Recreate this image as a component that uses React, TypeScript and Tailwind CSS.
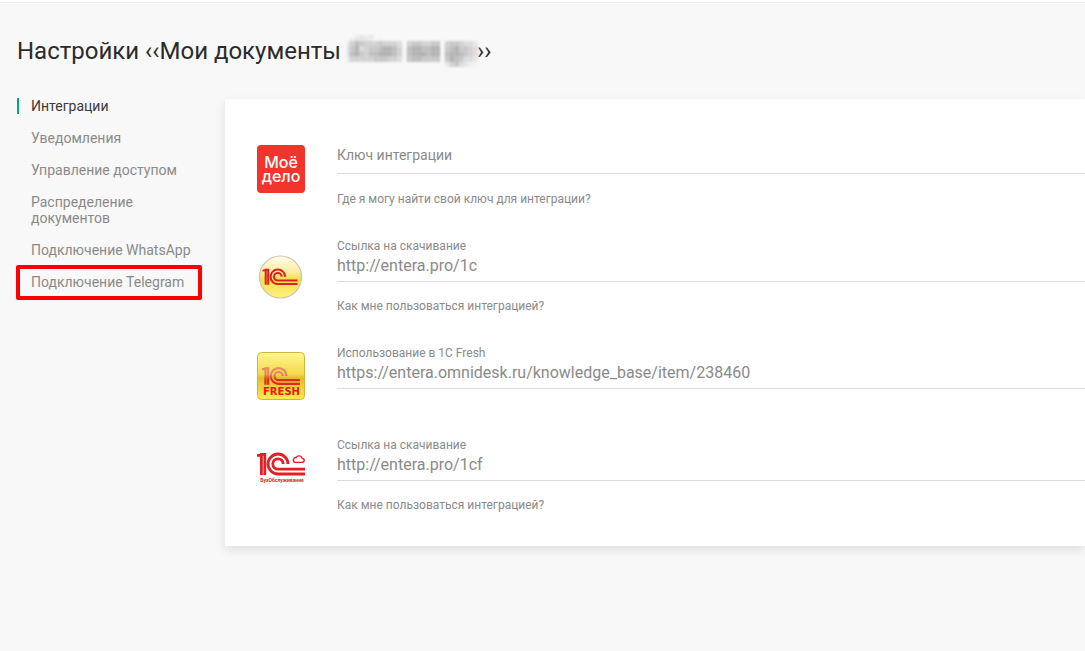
import type { ReactNode } from 'react';

const menu = [
	{ title: 'Интеграции', active: true },
	{ title: 'Уведомления' },
	{ title: 'Управление доступом' },
	{ title: 'Распределение документов' },
	{ title: 'Подключение WhatsApp' },
	{ title: 'Подключение Telegram', marked: true },
];

// grey level of every cell of the hidden company name, a dot is an empty cell
const mosaic = [
	'..3434......................',
	'.34443.1....................',
	'468766676665.6776677.6776554',
	'579567789986.8998899.7897765',
	'589768899986.8999899.8998765',
	'466666777665.7887777.7987554',
	'.....................4675431',
];

const greys: Record<string, string> = {
	'1': '#f3f3f3',
	'3': '#eeeeee',
	'4': '#e6e6e6',
	'5': '#dddddd',
	'6': '#d2d2d2',
	'7': '#c8c8c8',
	'8': '#bebebe',
	'9': '#b4b2b0',
};

function HiddenName() {
	return (
		<svg
			viewBox="0 0 134 32"
			aria-hidden="true"
			className="h-8 w-[134px] blur-[1px]">
			{mosaic.map((row, y) =>
				[...row].map((cell, x) =>
					cell === '.' ? null : (
						<rect
							key={`${x}-${y}`}
							x={x * 4.75 - 2}
							y={y < 2 ? y * 3 : 6 + (y - 2) * 5.2}
							width="4.9"
							height={y < 2 ? 3.2 : 5.4}
							fill={greys[cell]}
						/>
					),
				),
			)}
		</svg>
	);
}

// "1C" sign: the digit, then two nested arcs that run into a tail
function OneC({ color }: { color: string }) {
	return (
		<g
			fill="none"
			stroke={color}
			strokeWidth="2.8">
			<path d="M0 3.4h4.4V23" />
			<path d="M3 2.4h4.8V23" />
			<path d="M31 12A10 10 0 1 0 21 22H48" />
			<path d="M26.2 12A5.2 5.2 0 1 0 21 17.2H48" />
		</g>
	);
}

function MoeDeloIcon() {
	return (
		<svg
			viewBox="0 0 48 48"
			className="size-12">
			<rect
				width="48"
				height="48"
				rx="4"
				fill="#f2352c"
			/>
			<g
				fill="#fff"
				fontFamily="Inter, sans-serif"
				fontWeight="500"
				fontSize="16"
				textAnchor="middle">
				<text
					x="24"
					y="23">
					Моё
				</text>
				<text
					x="24"
					y="37">
					дело
				</text>
			</g>
		</svg>
	);
}

function OneCIcon() {
	return (
		<svg
			viewBox="0 0 48 48"
			className="size-12">
			<defs>
				<linearGradient
					id="coin"
					x1="0"
					y1="0"
					x2="0"
					y2="1">
					<stop
						offset="0"
						stopColor="#fffdf0"
					/>
					<stop
						offset=".4"
						stopColor="#fbec9c"
					/>
					<stop
						offset=".55"
						stopColor="#f4dc50"
					/>
					<stop
						offset="1"
						stopColor="#fdf37c"
					/>
				</linearGradient>
			</defs>
			<circle
				cx="23.5"
				cy="24"
				r="21"
				fill="url(#coin)"
				stroke="#cbc3ac"
				strokeWidth="1.2"
			/>
			<g transform="translate(5.5 15) scale(.73)">
				<OneC color="#d8231c" />
			</g>
		</svg>
	);
}

function FreshIcon() {
	return (
		<svg
			viewBox="0 0 48 48"
			className="size-12">
			<defs>
				<linearGradient
					id="fresh"
					x1="0"
					y1="0"
					x2="0"
					y2="1">
					<stop
						offset="0"
						stopColor="#fff88e"
					/>
					<stop
						offset=".46"
						stopColor="#f3d94e"
					/>
					<stop
						offset=".54"
						stopColor="#e5bd28"
					/>
					<stop
						offset="1"
						stopColor="#fdea50"
					/>
				</linearGradient>
				<linearGradient
					id="freshSign"
					gradientUnits="userSpaceOnUse"
					x1="0"
					y1="0"
					x2="0"
					y2="24">
					<stop
						offset=".4"
						stopColor="#e58a60"
					/>
					<stop
						offset=".7"
						stopColor="#dc2a22"
					/>
				</linearGradient>
			</defs>
			<rect
				x=".5"
				y=".5"
				width="47"
				height="47"
				rx="4"
				fill="url(#fresh)"
				stroke="#d6b43a"
			/>
			<g transform="translate(5 14.5) scale(.79)">
				<OneC color="url(#freshSign)" />
			</g>
			<text
				x="24.5"
				y="43"
				fill="#e01b1b"
				fontFamily="DejaVu Sans, sans-serif"
				fontWeight="700"
				fontSize="10"
				textAnchor="middle">
				FRESH
			</text>
		</svg>
	);
}

function AccountingIcon() {
	return (
		<svg
			viewBox="0 0 48 48"
			className="size-12">
			<g transform="translate(0 8)">
				<OneC color="#e31e24" />
			</g>
			<path
				d="M38.2 18.4h6.9a2 2 0 0 0 .2-4 3.4 3.4 0 0 0-6.2-.9 2.5 2.5 0 0 0-.9 4.9Z"
				fill="none"
				stroke="#e31e24"
				strokeWidth="1.4"
			/>
			<text
				x="25"
				y="38"
				fill="#e31e24"
				fontFamily="Roboto, sans-serif"
				fontWeight="700"
				fontSize="5"
				textAnchor="middle">
				БухОбслуживание
			</text>
		</svg>
	);
}

type RowProps = {
	id: string;
	label: string;
	value?: string;
	hint?: string;
	icon: ReactNode;
	iconClass: string;
};

function IntegrationRow({ id, label, value, hint, icon, iconClass }: RowProps) {
	return (
		<div className="flex min-h-[62px] gap-8">
			<div className={`shrink-0 ${iconClass}`}>{icon}</div>
			<div className="flex min-w-0 grow flex-col">
				{value ? (
					<>
						<label
							htmlFor={id}
							className="text-xs/[18px]">
							{label}
						</label>
						<input
							id={id}
							readOnly
							defaultValue={value}
							className="h-[27px] w-full border-b border-[#dcdcdc] pb-1.5 text-base/5 outline-none"
						/>
					</>
				) : (
					<input
						id={id}
						aria-label={label}
						placeholder={label}
						className="mt-2 mb-px h-[37px] w-full border-b border-[#dcdcdc] text-sm outline-none placeholder:text-[#8a8a8a]"
					/>
				)}
				{hint && (
					<a
						href="#"
						className="mt-4 self-start text-xs/4">
						{hint}
					</a>
				)}
			</div>
		</div>
	);
}

export default function App() {
	return (
		<div className="min-h-screen overflow-hidden bg-[#f8f8f8] font-['Roboto',sans-serif] text-[#8a8a8a]">
			<header className="h-[3px] border-b border-[#eeeeee] bg-white" />
			<main className="pt-8 pl-[17px]">
				<h1 className="flex text-2xl text-[#2b2b2b]">
					<span className="whitespace-pre">Настройки ‹‹Мои документы </span>
					<span className="w-[130px]">
						<HiddenName />
					</span>
					<span>››</span>
				</h1>
				<div className="mt-[31px] flex gap-8">
					<nav className="w-44 shrink-0">
						<ul className="flex flex-col gap-4 text-sm/4">
							{menu.map((item) => (
								<li
									key={item.title}
									className="relative">
									<a
										href="#"
										className={
											item.active
												? 'block border-l-2 border-[#00a97f] pl-3 text-[#3a3a3a]'
												: 'block border-l-2 border-transparent pl-3'
										}>
										{item.title}
									</a>
									{item.marked && (
										<span className="pointer-events-none absolute -top-[9px] -right-[9px] -bottom-[10px] -left-px rounded-xs border-4 border-[#ff0000]" />
									)}
								</li>
							))}
						</ul>
					</nav>
					<section className="mt-px flex grow flex-col gap-[30px] bg-white pt-[30px] pb-[33px] pl-8 shadow-[0_4px_10px_rgba(0,0,0,0.1)]">
						<IntegrationRow
							id="moedelo"
							label="Ключ интеграции"
							hint="Где я могу найти свой ключ для интеграции?"
							icon={<MoeDeloIcon />}
							iconClass="mt-4"
						/>
						<IntegrationRow
							id="onec"
							label="Ссылка на скачивание"
							value="http://entera.pro/1c"
							hint="Как мне пользоваться интеграцией?"
							icon={<OneCIcon />}
							iconClass="mt-4"
						/>
						<IntegrationRow
							id="fresh-link"
							label="Использование в 1С Fresh"
							value="https://entera.omnidesk.ru/knowledge_base/item/238460"
							icon={<FreshIcon />}
							iconClass="mt-2"
						/>
						<IntegrationRow
							id="accounting"
							label="Ссылка на скачивание"
							value="http://entera.pro/1cf"
							hint="Как мне пользоваться интеграцией?"
							icon={<AccountingIcon />}
							iconClass="mt-2"
						/>
					</section>
				</div>
			</main>
		</div>
	);
}
